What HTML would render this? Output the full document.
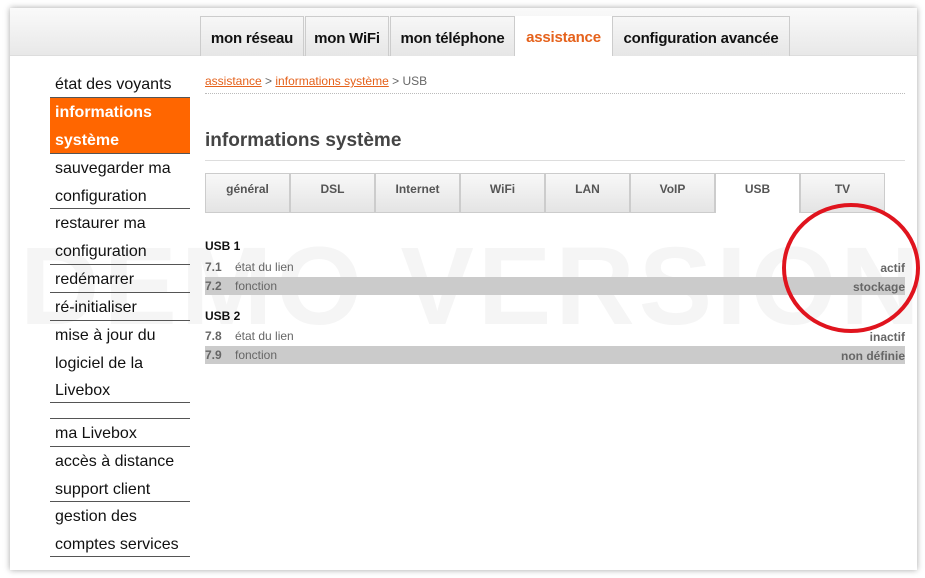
<!DOCTYPE html>
<html><head><meta charset="utf-8"><style>
*{margin:0;padding:0;box-sizing:border-box}
body{width:925px;height:578px;background:#fff;font-family:"Liberation Sans",sans-serif;position:relative;overflow:hidden}
.frame{position:absolute;left:10px;top:8px;width:907px;height:562px;background:#fff;box-shadow:0 0 6px rgba(0,0,0,.35)}
.hdr{position:absolute;left:10px;top:8px;width:907px;height:48px;background:linear-gradient(#fafafa,#e8e8e8);border-bottom:1px solid #ddd}
.tab{position:absolute;top:16px;height:40px;background:linear-gradient(#f7f7f7,#e6e6e6);border:1px solid #ccc;border-bottom:none;font-weight:bold;font-size:15px;color:#111;line-height:44px;text-align:center;letter-spacing:-0.2px}
.tab.on{background:#fff;color:#e5621c;border:none}
.side{position:absolute;left:50px;width:140px;font-size:16px;color:#111;line-height:27.5px;padding-left:5px;padding-top:1px;border-bottom:1px solid #555}
.side.on{background:#ff6600;color:#fff;font-weight:bold;border-bottom:1px solid #555}
.st{position:absolute;top:173px;height:40px;width:85px;background:linear-gradient(#f8f8f8,#e4e4e4);border:1px solid #ccc;font-weight:bold;font-size:12px;color:#555;text-align:center;line-height:30px}
.st.on{background:#fff;border-bottom:none}
.t{position:absolute;font-size:12px;color:#666;font-family:"Liberation Sans Narrow","Liberation Sans",sans-serif}
.band{position:absolute;left:205px;width:700px;height:18px;background:#cbcbcb}
</style></head><body>
<div class="frame"></div>
<div class="hdr"></div>
<div style="position:absolute;left:20px;top:227px;font-size:110px;font-weight:bold;color:#f5f5f5;letter-spacing:4px;white-space:nowrap;line-height:120px">DEMO VERSION</div>
<div class="tab" style="left:200px;width:104px">mon réseau</div>
<div class="tab" style="left:305px;width:84px">mon WiFi</div>
<div class="tab" style="left:390px;width:125px">mon téléphone</div>
<div class="tab on" style="left:515px;width:97px">assistance</div>
<div class="tab" style="left:612px;width:178px">configuration avancée</div>

<div class="side" style="top:70px;height:28px">état des voyants</div>
<div class="side on" style="top:98px;height:56px">informations système</div>
<div class="side" style="top:154px;height:55px">sauvegarder ma configuration</div>
<div class="side" style="top:209px;height:56px">restaurer ma configuration</div>
<div class="side" style="top:265px;height:28px">redémarrer</div>
<div class="side" style="top:293px;height:28px">ré-initialiser</div>
<div class="side" style="top:321px;height:82px">mise à jour du logiciel de la Livebox</div>
<div class="side" style="top:403px;height:16px"></div>
<div class="side" style="top:419px;height:28px">ma Livebox</div>
<div class="side" style="top:447px;height:55px">accès à distance<br>support client</div>
<div class="side" style="top:502px;height:55px">gestion des comptes services</div>

<div style="position:absolute;left:205px;top:74px;font-size:12px;color:#666"><u style="color:#e5621c">assistance</u> &gt; <u style="color:#e5621c">informations système</u> &gt; USB</div>
<div style="position:absolute;left:205px;top:93px;width:700px;border-top:1px dotted #bbb"></div>
<div style="position:absolute;left:205px;top:130px;font-size:19px;font-weight:bold;color:#444">informations système</div>
<div style="position:absolute;left:205px;top:160px;width:700px;border-top:1px solid #ddd"></div>

<div class="st" style="left:205px">général</div>
<div class="st" style="left:290px">DSL</div>
<div class="st" style="left:375px">Internet</div>
<div class="st" style="left:460px">WiFi</div>
<div class="st" style="left:545px">LAN</div>
<div class="st" style="left:630px">VoIP</div>
<div class="st on" style="left:715px">USB</div>
<div class="st" style="left:800px">TV</div>

<div class="band" style="top:277px"></div>
<div class="band" style="top:346px"></div>
<div class="t" style="left:205px;top:239px;color:#111;font-weight:bold">USB 1</div>
<div class="t" style="left:205px;top:260px;font-weight:bold">7.1</div><div class="t" style="left:235px;top:260px">état du lien</div><div class="t" style="right:20px;top:261px;font-weight:bold">actif</div>
<div class="t" style="left:205px;top:279px;font-weight:bold">7.2</div><div class="t" style="left:235px;top:279px">fonction</div><div class="t" style="right:20px;top:280px;font-weight:bold">stockage</div>
<div class="t" style="left:205px;top:309px;color:#111;font-weight:bold">USB 2</div>
<div class="t" style="left:205px;top:329px;font-weight:bold">7.8</div><div class="t" style="left:235px;top:329px">état du lien</div><div class="t" style="right:20px;top:330px;font-weight:bold">inactif</div>
<div class="t" style="left:205px;top:348px;font-weight:bold">7.9</div><div class="t" style="left:235px;top:348px">fonction</div><div class="t" style="right:20px;top:349px;font-weight:bold">non définie</div>

<svg style="position:absolute;left:0;top:0" width="925" height="578"><ellipse cx="851" cy="268" rx="67" ry="63" fill="none" stroke="#e0141e" stroke-width="4"/></svg>
</body></html>
